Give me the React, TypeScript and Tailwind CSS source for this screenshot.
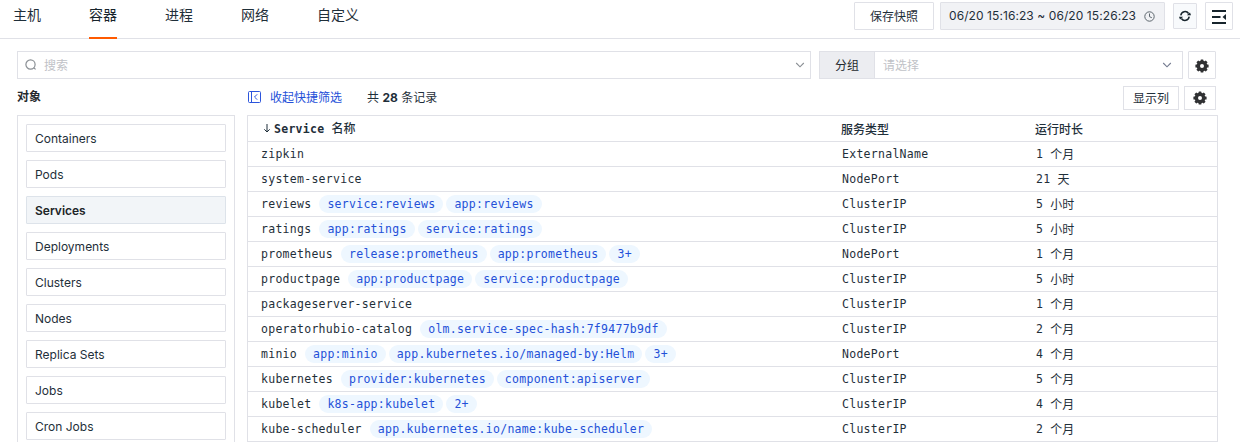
import React from 'react';

const tabs = ['主机', '容器', '进程', '网络', '自定义'];

const objects = ['Containers', 'Pods', 'Services', 'Deployments', 'Clusters', 'Nodes', 'Replica Sets', 'Jobs', 'Cron Jobs'];

type Row = { name: string; tags: string[]; type: string; age: string };

const rows: Row[] = [
  { name: 'zipkin', tags: [], type: 'ExternalName', age: '1 个月' },
  { name: 'system-service', tags: [], type: 'NodePort', age: '21 天' },
  { name: 'reviews', tags: ['service:reviews', 'app:reviews'], type: 'ClusterIP', age: '5 小时' },
  { name: 'ratings', tags: ['app:ratings', 'service:ratings'], type: 'ClusterIP', age: '5 小时' },
  { name: 'prometheus', tags: ['release:prometheus', 'app:prometheus', '3+'], type: 'NodePort', age: '1 个月' },
  { name: 'productpage', tags: ['app:productpage', 'service:productpage'], type: 'ClusterIP', age: '5 小时' },
  { name: 'packageserver-service', tags: [], type: 'ClusterIP', age: '1 个月' },
  { name: 'operatorhubio-catalog', tags: ['olm.service-spec-hash:7f9477b9df'], type: 'ClusterIP', age: '2 个月' },
  { name: 'minio', tags: ['app:minio', 'app.kubernetes.io/managed-by:Helm', '3+'], type: 'NodePort', age: '4 个月' },
  { name: 'kubernetes', tags: ['provider:kubernetes', 'component:apiserver'], type: 'ClusterIP', age: '5 个月' },
  { name: 'kubelet', tags: ['k8s-app:kubelet', '2+'], type: 'ClusterIP', age: '4 个月' },
  { name: 'kube-scheduler', tags: ['app.kubernetes.io/name:kube-scheduler'], type: 'ClusterIP', age: '2 个月' },
];

function Gear() {
  return (
    <svg width="14" height="14" viewBox="0 0 14 14" fill="#303133">
      <circle cx="7" cy="7" r="3.700" fill="none" stroke="#303133" strokeWidth="3.400" />
      {[0, 45, 90, 135].map((a) => (
        <rect key={a} x="5.600" y=".4" width="2.800" height="2.600" rx=".5" transform={`rotate(${a} 7 7)`} />
      ))}
      {[180, 225, 270, 315].map((a) => (
        <rect key={a} x="5.600" y=".4" width="2.800" height="2.600" rx=".5" transform={`rotate(${a} 7 7)`} />
      ))}
    </svg>
  );
}

function Chevron({ className }: { className: string }) {
  return (
    <svg className={className} width="10" height="6" viewBox="0 0 10 6" fill="none" stroke="currentColor" strokeWidth="1.1">
      <path d="M1.200 1 5 4.800 8.800 1" />
    </svg>
  );
}

export default function App() {
  return (
    <div className="flex h-[442px] w-[1240px] flex-col overflow-hidden bg-white font-['Inter','Noto_Sans_CJK_SC',sans-serif] text-xs text-[#1f2f3a]">
      <header className="flex h-[39px] shrink-0 justify-between border-b border-[#e0e1e7] pr-[7px] pl-[13px]">
        <nav className="flex gap-12 text-sm">
          {tabs.map((t) => (
            <div
              key={t}
              className={
                t === '容器'
                  ? 'box-border h-[39px] border-b-2 border-[#ff5a00] leading-[29px] text-[#17242c]'
                  : 'h-[39px] leading-[29px]'
              }
            >
              {t}
            </div>
          ))}
        </nav>
        <div className="flex items-start pt-0.5">
          <button className="h-7 w-20 rounded-[1px] border border-[#e0e1e7] pt-px">保存快照</button>
          <div className="ml-1.5 flex h-7 w-[225px] items-center rounded-[1px] border border-[#e0e1e7] bg-[#f1f2f5] pl-2 whitespace-nowrap">
            <span className="w-[195px] tracking-[0.08px]">06/20 15:16:23 ~ 06/20 15:26:23</span>
            <svg width="11" height="11" viewBox="0 0 11 11" fill="none" stroke="#5c666d">
              <circle cx="5.500" cy="5.500" r="4.700" />
              <path d="M5.500 2.500v3.200l2.300 1" />
            </svg>
          </div>
          <button className="mt-px ml-2 flex h-[26px] w-6 items-center justify-center rounded-[1px] border border-[#e0e1e7] bg-[#f8fafc]">
            <svg width="12" height="12" viewBox="0 0 12 12">
              <path d="M1.800 5.300A4.300 4.300 0 0 1 9.600 3.500M10.200 6.700A4.300 4.300 0 0 1 2.400 8.500" fill="none" stroke="#17242c" strokeWidth="1.500" />
              <path d="M7.800 5.300H12L11 2.600zM4.200 6.700H0L1 9.400z" fill="#17242c" />
            </svg>
          </button>
          <button className="ml-2 flex h-7 w-7 items-center justify-center rounded-[1px] border border-[#e0e1e7] pt-px">
            <svg width="14" height="14" viewBox="0 0 14 14" fill="#17242c">
              <path d="M0 0h14v2H0zM0 6h8.500v2H0zM0 12h14v2H0zM14 4v6l-3.500-3z" />
            </svg>
          </button>
        </div>
      </header>

      <div className="mt-3 flex h-7 shrink-0 pl-[17px]">
        <div className="flex w-[794px] items-center border border-[#e0e1e7] pr-[5px] pl-[7px] text-[#bfc2c7]">
          <svg width="12" height="12" viewBox="0 0 12 12" fill="none" stroke="#8a8f94" strokeWidth="1.200">
            <circle cx="5.500" cy="5.500" r="4.600" />
            <path d="m8.600 8.600 2 1.800" />
          </svg>
          <span className="ml-[7px] flex-1 pt-px">搜索</span>
          <Chevron className="text-[#8a8f94]" />
        </div>
        <div className="ml-2 flex w-[364px] border border-[#e0e1e7]">
          <div className="flex w-[55px] items-center justify-center border-r border-[#e0e1e7] bg-[#ecedf1] pt-px text-[#24292d]">分组</div>
          <div className="flex flex-1 items-center pl-2 text-[#bfc2c7]">
            <span className="flex-1 pt-px">请选择</span>
            <Chevron className="mr-2.5 text-[#747b90]" />
          </div>
        </div>
        <button className="ml-[5px] flex w-7 items-center justify-center rounded-[1px] border border-[#e0e1e7] pt-px">
          <Gear />
        </button>
      </div>

      <main className="flex min-h-0 flex-1 pl-[17px]">
        <aside className="flex w-[218px] shrink-0 flex-col">
          <h2 className="h-9 shrink-0 pt-px leading-[34px] font-semibold text-[#24292d]">对象</h2>
          <div className="flex flex-1 flex-col gap-2 border border-b-0 border-[#e0e1e7] p-2">
            {objects.map((o) => (
              <div
                key={o}
                className={
                  o === 'Services'
                    ? 'h-7 w-[200px] shrink-0 rounded-[1px] border border-[#dde3ea] bg-[#f2f5f8] pl-2 leading-7 font-semibold text-[#202427]'
                    : 'h-7 w-[200px] shrink-0 rounded-[1px] border border-[#e0e1e7] pl-2 leading-7'
                }
              >
                {o}
              </div>
            ))}
          </div>
        </aside>

        <section className="ml-3 w-[971px]">
          <div className="flex h-9 items-center">
            <svg width="14" height="12" viewBox="0 0 14 12" fill="none" stroke="#2c55dc" strokeWidth="1">
              <rect x="1.500" y=".5" width="12" height="11" rx="1" />
              <path d="M4.500.500v11M10.200 3.300 7.500 6l2.700 2.700" />
            </svg>
            <span className="ml-[9px] pt-px text-[#2450d8]">收起快捷筛选</span>
            <span className="ml-[25px] pt-px whitespace-pre">
              共 <b className="font-bold">28</b> 条记录
            </span>
            <button className="mt-[2px] ml-auto h-6 w-14 border border-[#e0e1e7] pt-px">显示列</button>
            <button className="mt-[2px] mr-[2px] ml-[5px] flex h-6 w-8 items-center justify-center border border-[#e0e1e7]">
              <Gear />
            </button>
          </div>

          <div className="rounded-t-[1px] border border-b-0 border-[#e0e1e7] font-['DejaVu_Sans_Mono','Noto_Sans_CJK_SC',monospace]">
            <div className="flex h-[26px] items-center border-b border-[#e0e1e7] pl-[15px] font-medium">
              <div className="flex w-[578px] items-center">
                <svg width="8" height="9" viewBox="0 0 8 9" fill="none" stroke="#1f2f3a" strokeWidth="1">
                  <path d="M4 0v8M1.300 5.300 4 8l2.700-2.700" />
                </svg>
                <span className="mt-[2px] ml-[3px] text-[11.5px] font-bold tracking-[0.277px]">Service</span>
                <span className="ml-[7px] font-['Noto_Sans_CJK_SC',sans-serif]">名称</span>
              </div>
              <div className="w-[194px] font-['Noto_Sans_CJK_SC',sans-serif]">服务类型</div>
              <div className="font-['Noto_Sans_CJK_SC',sans-serif]">运行时长</div>
            </div>
            {rows.map((r) => (
              <div
                key={r.name}
                className="flex h-[25px] items-center border-b border-[#e0e1e7] pl-[13px] text-[11.5px] tracking-[0.277px]"
              >
                <div className="flex w-[581px] items-center gap-[3px]">
                  <span className="mr-[5px] pt-px">{r.name}</span>
                  {r.tags.map((t) => (
                    <span key={t} className="h-[18px] rounded-full bg-[#eef7ff] px-2 leading-[19px] text-[#2450d8]">
                      {t}
                    </span>
                  ))}
                </div>
                <div className="w-[194px] pt-px">{r.type}</div>
                <div className="flex items-center gap-[7px] pt-px">
                  <span>{r.age.split(' ')[0]}</span>
                  <span className="pt-px text-xs tracking-normal">{r.age.split(' ')[1]}</span>
                </div>
              </div>
            ))}
          </div>
        </section>
      </main>
    </div>
  );
}
